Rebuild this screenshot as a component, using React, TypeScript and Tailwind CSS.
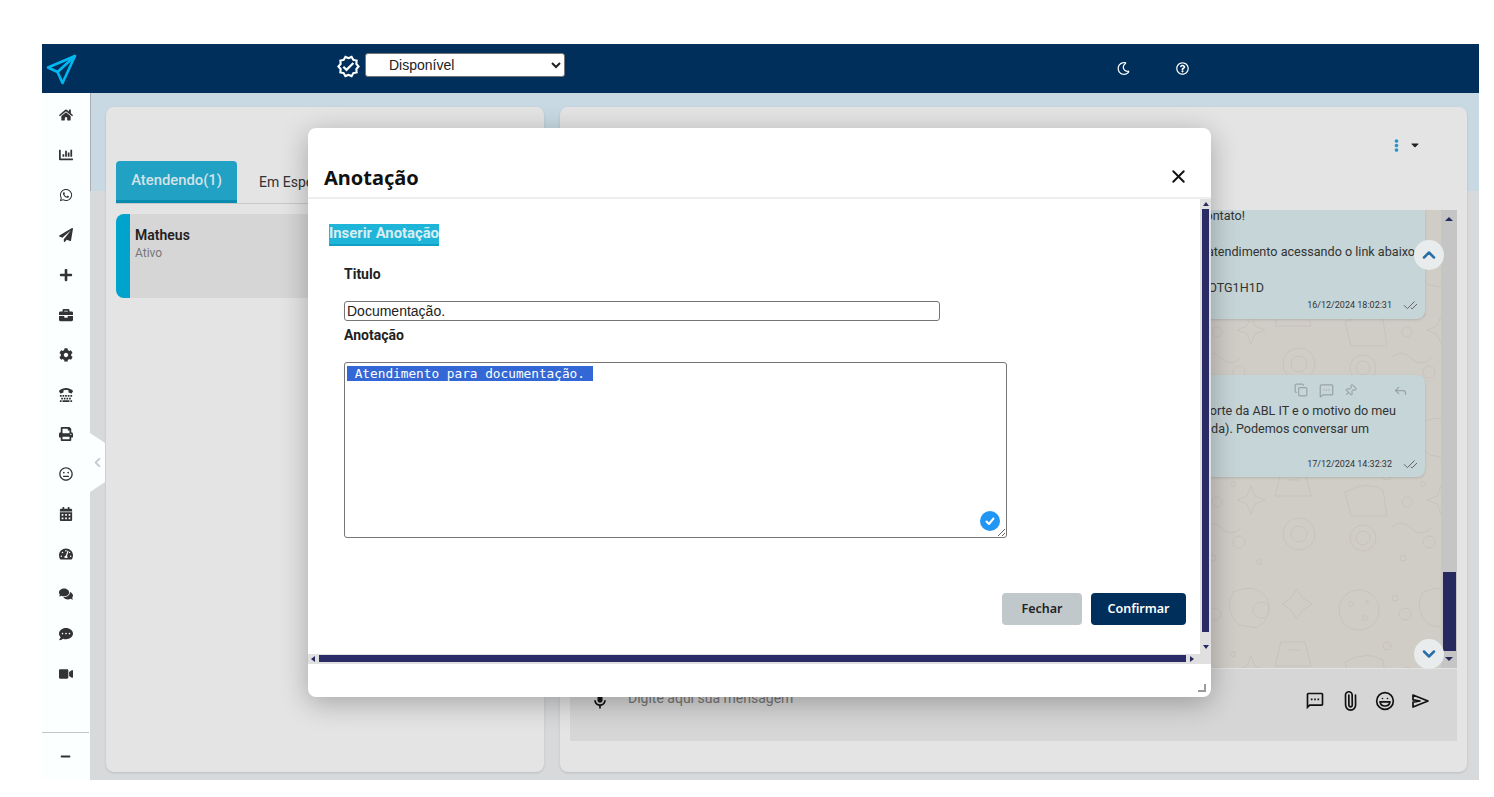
import { CheckCheck, ChevronDown, ChevronLeft, ChevronUp, Copy, Laugh, MessageSquareMore, Paperclip, Pin, Reply, X } from "lucide-react";
import {
  FaBriefcase,
  FaCalendarAlt,
  FaCaretDown,
  FaChartBar,
  FaCog,
  FaCommentDots,
  FaComments,
  FaEllipsisV,
  FaHome,
  FaMinus,
  FaPaperPlane,
  FaPlus,
  FaPrint,
  FaRegMeh,
  FaRegMoon,
  FaRegQuestionCircle,
  FaTachometerAlt,
  FaTty,
  FaVideo,
  FaWhatsapp,
} from "react-icons/fa";
import { MdOutlineMic, MdOutlineSms, MdOutlineVerified } from "react-icons/md";

const navIcons = [
  FaHome,
  FaChartBar,
  FaWhatsapp,
  FaPaperPlane,
  FaPlus,
  FaBriefcase,
  FaCog,
  FaTty,
  FaPrint,
  FaRegMeh,
  FaCalendarAlt,
  FaTachometerAlt,
  FaComments,
  FaCommentDots,
  FaVideo,
];

function Header() {
  return (
    <header className="h-[49px] shrink-0 bg-[#002f5b] flex items-center text-white">
      <svg width="34" height="34" viewBox="0 0 34 34" className="ml-[1px] mt-[5px]" fill="none" stroke="#00b8f0" strokeWidth="2.6" strokeLinejoin="round">
        <path d="M32 2 L5 13.5 L14.5 18 L19.5 29 Z" />
        <path d="M14.5 18 L32 2" />
      </svg>
      <MdOutlineVerified size={25} className="ml-[259px] -mt-[4px]" />
      <select className="ml-[4px] -mt-[7px] w-[200px] h-[24px] bg-white text-[#222] text-[14px] pl-[19px] rounded-[3px] border border-[#767676] font-['Liberation_Sans',sans-serif]" defaultValue="Disponível">
        <option>Disponível</option>
      </select>
      <FaRegMoon size={13} className="ml-[552px] -mt-[1px]" />
      <FaRegQuestionCircle size={13} className="ml-[46px] -mt-[1px]" />
    </header>
  );
}

function Sidebar() {
  return (
    <nav className="w-[48px] shrink-0 bg-[#fbffff] flex flex-col pr-px">
      <div className="pt-[2px] flex flex-col">
        {navIcons.map((Icon, i) => (
          <div key={i} className="h-[39.95px] flex items-center justify-center text-[#333]">
            <Icon size={14} />
          </div>
        ))}
      </div>
      <div className="mt-auto h-[48px] border-t border-[#c4c6c8] flex items-center justify-center text-[#333]">
        <FaMinus size={11} />
      </div>
    </nav>
  );
}

function ChatsPanel() {
  return (
    <section className="w-[438px] shrink-0 rounded-lg bg-[#e4e4e4] shadow-sm pt-[54px] px-[10px]">
      <div className="flex border-b border-[#c8c8c8] h-[43px]">
        <div className="w-[121px] h-[42px] rounded-t bg-[#21a1c4] border-b-[3px] border-[#0a8bb0] text-[#d6e2e6] text-[14.8px] font-medium flex items-center justify-center">Atendendo(1)</div>
        <div className="ml-[22px] h-[42px] text-[#333] text-[14px] flex items-center">Em Espera</div>
      </div>
      <div className="mt-[10px] h-[84px] rounded-l-lg rounded-r bg-[#d6d6d6] flex overflow-hidden">
        <div className="w-[14px] bg-[#00a3cc]" />
        <div className="pl-[5px] pt-[12px]">
          <div className="text-[14px] font-semibold leading-[18px] text-[#222]">Matheus</div>
          <div className="text-[12px] leading-[18px] text-[#777]">Ativo</div>
        </div>
      </div>
    </section>
  );
}

function Wallpaper() {
  return (
    <svg className="absolute inset-0 w-full h-full" fill="none" stroke="#c7c3bc" strokeWidth="1">
      <defs>
        <pattern id="doodles" width="190" height="170" patternUnits="userSpaceOnUse" x="1" y="30">
          <circle cx="28" cy="30" r="20" />
          <circle cx="20" cy="24" r="2.5" />
          <circle cx="34" cy="38" r="2.5" />
          <circle cx="36" cy="22" r="1.5" />
          <circle cx="64" cy="18" r="3" />
          <circle cx="74" cy="34" r="6" />
          <path d="M92 12 q22 -10 34 6 q8 18 -10 30 l-18 -3 q-16 -14 -6 -33z" />
          <circle cx="120" cy="30" r="8" />
          <path d="M150 18 l6 -9 l6 9 l9 6 l-9 6 l-6 9 l-6 -9 l-9 -6z" />
          <circle cx="56" cy="66" r="4" />
          <path d="M14 82 q22 -12 38 -2 l4 26 h-36z" />
          <circle cx="32" cy="128" r="13" />
          <circle cx="32" cy="128" r="7" />
          <circle cx="76" cy="92" r="5" />
          <circle cx="92" cy="74" r="2.5" />
          <path d="M106 86 l4 -10 l4 10 l10 4 l-10 4 l-4 10 l-4 -10 l-10 -4z" />
          <path d="M140 62 h24 l6 24 h-36z" />
          <path d="M146 70 h12" />
          <circle cx="158" cy="124" r="16" />
          <circle cx="158" cy="124" r="8" />
          <circle cx="98" cy="132" r="6" />
          <circle cx="72" cy="148" r="3" />
          <circle cx="118" cy="152" r="2.5" />
          <path d="M60 118 q10 -10 20 0 t20 0" />
        </pattern>
      </defs>
      <rect width="100%" height="100%" fill="url(#doodles)" stroke="none" />
    </svg>
  );
}

function Stamp({ children }: { children: string }) {
  return (
    <div className="flex items-center justify-end pr-[7px] h-[16px] text-[9px] text-[#333]">
      <span>{children}</span>
      <CheckCheck size={15} strokeWidth={1.6} className="ml-[11px] text-[#666]" />
    </div>
  );
}

function Conversation() {
  return (
    <section className="flex-1 rounded-lg bg-[#e4e4e4] shadow-sm px-[10px] flex flex-col">
      <div className="h-[103px] pt-[28px] pr-[36px] flex justify-end items-start">
        <div className="h-[20px] flex items-center gap-[6px]">
          <FaEllipsisV size={13} className="text-[#2a93c9]" />
          <FaCaretDown size={12} className="text-[#222]" />
        </div>
      </div>
      <div className="relative h-[458px] flex bg-[#d0ccc6]">
        <div className="relative flex-1 overflow-hidden pr-[16px] flex flex-col items-end">
          <Wallpaper />
          <div className="relative w-[560px] -mt-[20px] pt-[20px] pb-[6px] rounded-lg bg-[#c6d5d8] shadow-sm text-[12.6px] leading-[18px] text-[#333] text-right">
            <div className="pr-[180px] leading-[12px] mb-[3px]">Obrigado pelo contato!</div>
            <div className="h-[18px]" />
            <div className="pr-[10px]">Acompanhe seu atendimento acessando o link abaixo</div>
            <div className="h-[18px]" />
            <div className="pr-[161px]">https://abl.it/DOTG1H1D</div>
            <Stamp>16/12/2024 18:02:31</Stamp>
          </div>
          <div className="relative w-[560px] mt-[56px] pt-[8px] pb-[5px] rounded-lg bg-[#c6d5d8] shadow-sm text-[12.6px] leading-[18px] text-[#333]">
            <div className="h-[14px] mb-[5px] flex justify-end items-center text-[#9aa3a6]">
              <Copy size={14} className="mr-[11px]" />
              <MessageSquareMore size={15} className="mr-[10px]" />
              <Pin size={13} className="mr-[36px] rotate-45" />
              <Reply size={15} className="mr-[17px]" />
            </div>
            <div className="text-right pr-[29px]">Sou do suporte da ABL IT e o motivo do meu</div>
            <div className="text-right pr-[56px]">contato é a sua chamada). Podemos conversar um</div>
            <div className="h-[18px]" />
            <Stamp>17/12/2024 14:32:32</Stamp>
          </div>
        </div>
        <div className="w-[16px] shrink-0 bg-[#c5c5c5] flex flex-col items-center">
          <div className="mt-[7px] w-0 h-0 border-x-[4px] border-x-transparent border-b-[4px] border-b-[#272a5e]" />
          <div className="mt-auto w-[13px] h-[79px] bg-[#272a5e]" />
          <div className="mt-[6px] mb-[7px] w-0 h-0 border-x-[4px] border-x-transparent border-t-[4px] border-t-[#272a5e]" />
        </div>
        <div className="absolute right-[13px] top-[30px] w-[30px] h-[30px] rounded-full bg-[#e9ecec] flex items-center justify-center text-[#2a6ea8]">
          <ChevronUp size={20} strokeWidth={3} />
        </div>
        <div className="absolute right-[13px] -bottom-[1px] w-[30px] h-[30px] rounded-full bg-[#e9ecec] flex items-center justify-center text-[#2a6ea8]">
          <ChevronDown size={20} strokeWidth={3} />
        </div>
      </div>
      <div className="h-[73px] bg-[#d6d6d6] border-t border-[#e2e2e2] flex items-start pt-[20px] pl-[20px] pr-[27px]">
        <MdOutlineMic size={20} className="mt-[2px] text-[#111]" />
        <span className="ml-[18px] text-[14px] leading-[18px] text-[#777]">Digite aqui sua mensagem</span>
        <div className="ml-auto mt-[2px] flex gap-[15px] text-[#111]">
          <MdOutlineSms size={20} />
          <Paperclip size={20} strokeWidth={2} className="-rotate-45" />
          <Laugh size={20} strokeWidth={2} />
          <svg width="20" height="20" viewBox="0 0 20 20" fill="none" stroke="currentColor" strokeWidth="1.7" strokeLinejoin="round">
            <path d="M3 4 L18 10 L3 16 L3 11.2 L10 10 L3 8.8 Z" />
          </svg>
        </div>
      </div>
    </section>
  );
}

function NoteModal() {
  return (
    <div className="absolute left-[308px] top-[128px] w-[903px] h-[569px] rounded-lg bg-white shadow-[0_6px_28px_rgba(0,0,0,0.28)] flex flex-col overflow-hidden">
      <div className="h-[71px] shrink-0 border-b-2 border-[#eeeeee] pt-[29px] pl-[16px] pr-[22px] flex items-center justify-between">
        <h2 className="text-[20px] font-bold text-[#111] font-['Noto_Sans',sans-serif] mt-[2px]">Anotação</h2>
        <X size={21} strokeWidth={2.2} className="text-[#111] -mt-[2px]" />
      </div>
      <div className="flex">
        <div className="flex-1 flex flex-col">
          <div className="h-[455px] pt-[25px] pl-[21px] pr-[14px]">
            <div className="w-[110px] h-[22px] bg-[#1fb5d9] border-b-2 border-[#0ea0c5] text-[#d9eef3] text-[14.8px] font-bold leading-[18px] whitespace-nowrap">Inserir Anotação</div>
            <div className="ml-[15px]">
              <div className="mt-[18px] text-[14px] leading-[20px] font-bold text-[#222]">Titulo</div>
              <input
                readOnly
                value="Documentação."
                className="block mt-[17px] w-[596px] h-[20px] px-[2px] border border-[#767676] rounded-[3px] text-[14px] text-[#222] font-['Liberation_Sans',sans-serif]"
              />
              <div className="mt-[4px] text-[14px] leading-[20px] font-bold text-[#222]">Anotação</div>
              <div className="relative mt-[17px] w-[663px] h-[176px] border border-[#767676] rounded-[3px] p-[2px] resize overflow-auto font-['DejaVu_Sans_Mono',monospace] text-[12.75px] leading-[17px] whitespace-pre">
                <span className="bg-[#3367d6] text-white"> Atendimento para documentação. </span>
              </div>
            </div>
            <div className="relative">
              <div className="absolute left-[651px] -top-[27px] w-[20px] h-[20px] rounded-full bg-[#2196f3] flex items-center justify-center text-white">
                <svg width="12" height="12" viewBox="0 0 12 12" fill="none" stroke="currentColor" strokeWidth="2" strokeLinecap="round" strokeLinejoin="round">
                  <path d="M2.5 6.5 L5 9 L9.5 3.5" />
                </svg>
              </div>
            </div>
            <div className="mt-[55px] flex justify-end gap-[9px] font-['Noto_Sans',sans-serif] text-[12.5px] font-semibold">
              <button className="w-[80px] h-[32px] rounded bg-[#c0c8cc] text-[#222]">Fechar</button>
              <button className="w-[95px] h-[32px] rounded bg-[#002f5b] text-white">Confirmar</button>
            </div>
          </div>
          <div className="h-[10px] bg-[#e0e0e0] flex items-start pt-px">
            <div className="ml-[3px] mt-[1px] w-0 h-0 border-y-[3px] border-y-transparent border-r-[4px] border-r-[#272a5e]" />
            <div className="ml-[4px] w-[867px] h-[7px] bg-[#2b2b66]" />
            <div className="ml-[4px] mt-[1px] w-0 h-0 border-y-[3px] border-y-transparent border-l-[4px] border-l-[#272a5e]" />
          </div>
        </div>
        <div className="w-[11px] shrink-0 bg-[#e0e0e0] flex flex-col items-center">
          <div className="mt-[3px] w-0 h-0 border-x-[3px] border-x-transparent border-b-[4px] border-b-[#272a5e]" />
          <div className="mt-[3px] w-[7px] h-[423px] bg-[#2b2b66]" />
          <div className="mt-[13px] w-0 h-0 border-x-[3px] border-x-transparent border-t-[4px] border-t-[#272a5e]" />
        </div>
      </div>
      <div className="flex-1 flex justify-end items-end pr-[5px] pb-[5px]">
        <div className="w-[8px] h-[8px] border-r-2 border-b-2 border-[#9a9a9a]" />
      </div>
    </div>
  );
}

export default function App() {
  return (
    <div className="relative w-[1494px] h-[797px] bg-white pl-[42px] pr-[15px] pt-[44px] pb-[17px] font-['Roboto',sans-serif] overflow-hidden">
      <div className="h-full flex flex-col">
        <Header />
        <div className="flex-1 flex min-h-0">
          <Sidebar />
          <main className="relative flex-1 flex gap-[16px] pt-[14px] pb-[8px] pl-[16px] pr-[12px] bg-[linear-gradient(#c8d9e3_98px,#d8d9db_98px)]">
            <div className="absolute left-0 top-0 w-px h-[98px] bg-[#a9aeb2]" />
            <ChatsPanel />
            <Conversation />
          </main>
        </div>
      </div>
      <div className="absolute left-[90px] top-[433px] w-[15px] h-[59px] bg-[#fbffff] [clip-path:polygon(0_0,100%_17%,100%_83%,0_100%)] flex items-center justify-center text-[#c8ccd0]">
        <ChevronLeft size={15} strokeWidth={3} />
      </div>
      <NoteModal />
    </div>
  );
}
